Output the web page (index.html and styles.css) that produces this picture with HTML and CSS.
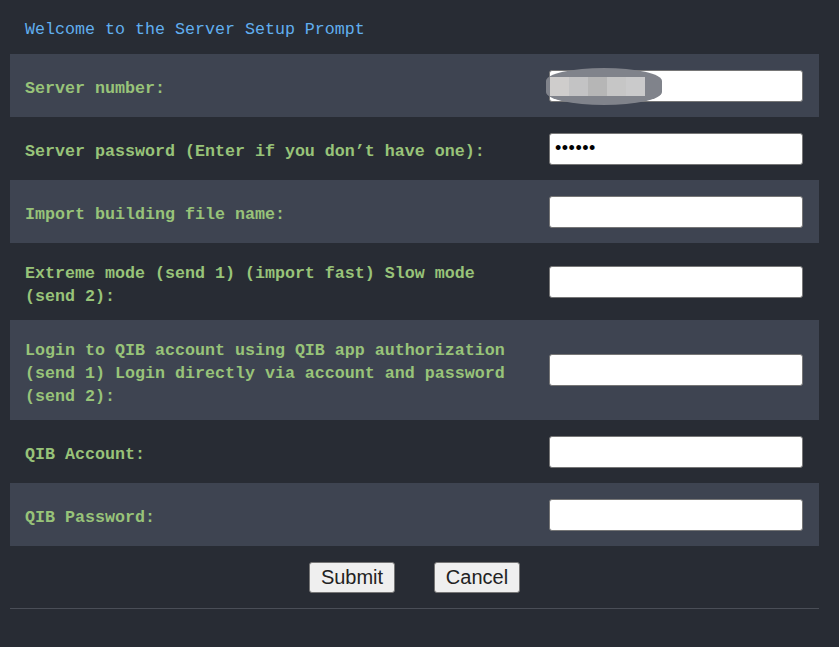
FILE: index.html
```html
<!DOCTYPE html>
<html>
<head>
<meta charset="utf-8">
<link rel="stylesheet" href="styles.css">
</head>
<body>
<div class="page">
  <div class="title">Welcome to the Server Setup Prompt</div>
  <div class="row alt">
    <label class="label">Server number:</label>
    <div class="field">
      <input class="input" type="text">
      <div class="blur">
        <span class="px p1"></span><span class="px p2"></span><span class="px p3"></span><span class="px p4"></span><span class="px p5"></span>
      </div>
    </div>
  </div>
  <div class="row">
    <label class="label">Server password (Enter if you don’t have one):</label>
    <div class="field"><input class="input pw" type="password" value="123456"></div>
  </div>
  <div class="row alt">
    <label class="label">Import building file name:</label>
    <div class="field"><input class="input" type="text"></div>
  </div>
  <div class="row">
    <label class="label">Extreme mode (send 1) (import fast) Slow mode (send 2):</label>
    <div class="field"><input class="input" type="text"></div>
  </div>
  <div class="row alt">
    <label class="label">Login to QIB account using QIB app authorization (send 1) Login directly via account and password (send 2):</label>
    <div class="field"><input class="input" type="text"></div>
  </div>
  <div class="row">
    <label class="label">QIB Account:</label>
    <div class="field"><input class="input" type="text"></div>
  </div>
  <div class="row alt">
    <label class="label">QIB Password:</label>
    <div class="field"><input class="input" type="text"></div>
  </div>
  <div class="actions">
    <button class="btn">Submit</button>
    <button class="btn">Cancel</button>
  </div>
  <div class="divider"></div>
</div>
</body>
</html>
```

FILE: styles.css
```css
html, body {
  margin: 0;
  padding: 0;
  background: #282c34;
  height: 100%;
}
.page {
  padding: 10px 20px 10px 10px;
  font-family: "Liberation Mono", "DejaVu Sans Mono", monospace;
  font-size: 16.67px;
  line-height: 23px;
}
.title {
  color: #61afef;
  padding: 8px 15px 13px 15px;
}
.row {
  display: flex;
  align-items: center;
  gap: 30px;
  padding: 15.5px 16px 15.5px 15px;
}
.row.alt {
  background: #3e4451;
}
.label {
  flex: 1;
  color: #98c379;
  font-weight: bold;
  padding-top: 3px;
  margin-bottom: -3px;
}
.field {
  position: relative;
  width: 254px;
  height: 32px;
}
.input {
  box-sizing: border-box;
  width: 254px;
  height: 32px;
  margin: 0;
  border: 1px solid #767676;
  border-radius: 3px;
  background: #fff;
  padding: 0 5px;
  font-size: 14px;
  color: #000;
}
.input.pw {
  font-size: 18px;
  letter-spacing: 0.5px;
}
.blur {
  position: absolute;
  left: -3px;
  top: -2px;
  width: 116px;
  height: 37px;
  border-radius: 50% / 35%;
  background: #80838b;
  display: flex;
  align-items: center;
  padding-left: 4px;
  box-sizing: border-box;
}
.px {
  width: 19px;
  height: 19px;
}
.p1 { background: #cfcdcc; }
.p2 { background: #c3c3c4; }
.p3 { background: #b6b6b6; }
.p4 { background: #c6c6c6; }
.p5 { background: #cacacb; }
.actions {
  display: flex;
  justify-content: center;
  gap: 39px;
  padding: 16px 0 15px;
}
.btn {
  box-sizing: border-box;
  width: 86px;
  height: 31px;
  margin: 0;
  padding: 0;
  border: 1px solid #767676;
  border-radius: 3px;
  background: #efefef;
  color: #222;
  font-family: "Liberation Sans", Arial, sans-serif;
  font-size: 20px;
}
.divider {
  height: 1px;
  background: #4a4e57;
}
```
